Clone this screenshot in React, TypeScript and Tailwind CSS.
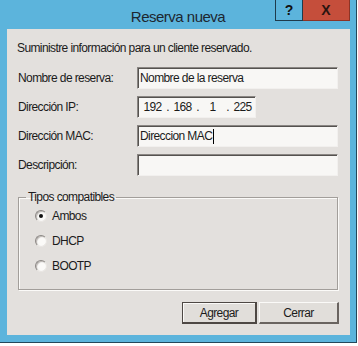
import React from "react";

const rows = [
  { label: "Nombre de reserva:", value: "Nombre de la reserva" },
  { label: "Dirección IP:", ip: ["192", "168", "1", "225"] },
  { label: "Dirección MAC:", value: "Direccion MAC", caret: true },
  { label: "Descripción:", value: "" },
];

const types = [
  { label: "Ambos", checked: true },
  { label: "DHCP", checked: false },
  { label: "BOOTP", checked: false },
];

function Radio({ checked }: { checked: boolean }) {
  return (
    <span className="flex items-center justify-center w-[12px] h-[12px] rounded-full bg-[#fbfaf8] border border-t-[#8b8784] border-l-[#8b8784] border-r-[#e9e6e3] border-b-[#e9e6e3] shadow-[inset_1px_1px_1px_#b9b5b1]">
      {checked && <span className="w-[4px] h-[4px] rounded-full bg-[#111]" />}
    </span>
  );
}

export default function App() {
  return (
    <div className="w-[358px] h-[346px] bg-white overflow-hidden font-['Liberation_Sans',Arial,sans-serif] text-[12px] tracking-[-0.6px] text-[#1b1b1b]">
      <div className="w-[357px] h-[343px] bg-[#5cb4dc] border-r border-b border-[#24475a] flex flex-col">
        {/* title bar */}
        <div className="relative h-[29px] flex items-center justify-center pt-[3px]">
          <span className="text-[15px] tracking-[-0.5px] text-[#1d2730] leading-none">Reserva nueva</span>
          <div className="absolute right-[6px] top-0 flex h-[21px] tracking-normal">
            <div className="w-[28px] h-full border border-t-0 border-[#1e3b4c] flex items-center justify-center text-[14px] font-bold text-[#111]">
              ?
            </div>
            <div className="w-[47px] h-full bg-[#c54e3b] border-b border-r border-[#8d3325] flex items-center justify-center text-[14px] font-bold text-[#2a1410]">
              X
            </div>
          </div>
        </div>

        {/* dialog body */}
        <div className="ml-[7px] w-[343px] h-[306px] bg-[#e3e0dd] flex flex-col">
          <p className="pl-[10px] pt-[11px] leading-[16px] whitespace-nowrap">
            Suministre información para un cliente reservado.
          </p>

          <div className="flex flex-col gap-[7px] mt-[11px] pl-[11px]">
            {rows.map((r) => (
              <div key={r.label} className="flex items-center h-[22px]">
                <span className="w-[119px] whitespace-nowrap">{r.label}</span>
                <div
                  className={`h-[22px] ${
                    r.ip ? "w-[119px]" : "w-[201px]"
                  } bg-[#f8f7f5] border border-t-[#8a8683] border-l-[#8a8683] border-r-[#f2f0ee] border-b-[#f2f0ee] shadow-[inset_1px_1px_0_#55524f] flex items-center pl-[2px] whitespace-nowrap`}
                >
                  {r.ip ? (
                    <div className="flex items-center">
                      {r.ip.map((seg, i) => (
                        <React.Fragment key={i}>
                          <span className="w-[25px] text-center">{seg}</span>
                          {i < 3 && <span className="w-[5px] text-center">.</span>}
                        </React.Fragment>
                      ))}
                    </div>
                  ) : (
                    <>
                      <span>{r.value}</span>
                      {r.caret && <span className="ml-[1px] w-[1px] h-[15px] bg-black" />}
                    </>
                  )}
                </div>
              </div>
            ))}
          </div>

          <fieldset className="ml-[11px] mt-[14px] w-[320px] h-[100px] border border-[#a29e9a] shadow-[inset_1px_1px_0_#fbfaf8,1px_1px_0_#fbfaf8] px-0 pt-[4px] pb-0">
            <legend className="ml-[7px] px-[2px] leading-[14px]">Tipos compatibles</legend>
            <div className="flex flex-col pl-[16px] gap-[10px]">
              {types.map((t) => (
                <div key={t.label} className="flex items-center gap-[5px] h-[15px]">
                  <Radio checked={t.checked} />
                  <span>{t.label}</span>
                </div>
              ))}
            </div>
          </fieldset>

          <div className="flex justify-end gap-[2px] pr-[11px] mt-[12px]">
            <button className="w-[75px] h-[22px] bg-[#e1deda] border border-[#4e4844] border-r-2 border-b-2 shadow-[inset_1px_1px_0_#fbfaf8] flex items-center justify-center">
              Agregar
            </button>
            <button className="w-[80px] h-[22px] bg-[#e1deda] border border-t-[#fbfaf8] border-l-[#fbfaf8] border-r-2 border-b-2 border-r-[#6a6460] border-b-[#6a6460] flex items-center justify-center">
              Cerrar
            </button>
          </div>
        </div>
      </div>
    </div>
  );
}
